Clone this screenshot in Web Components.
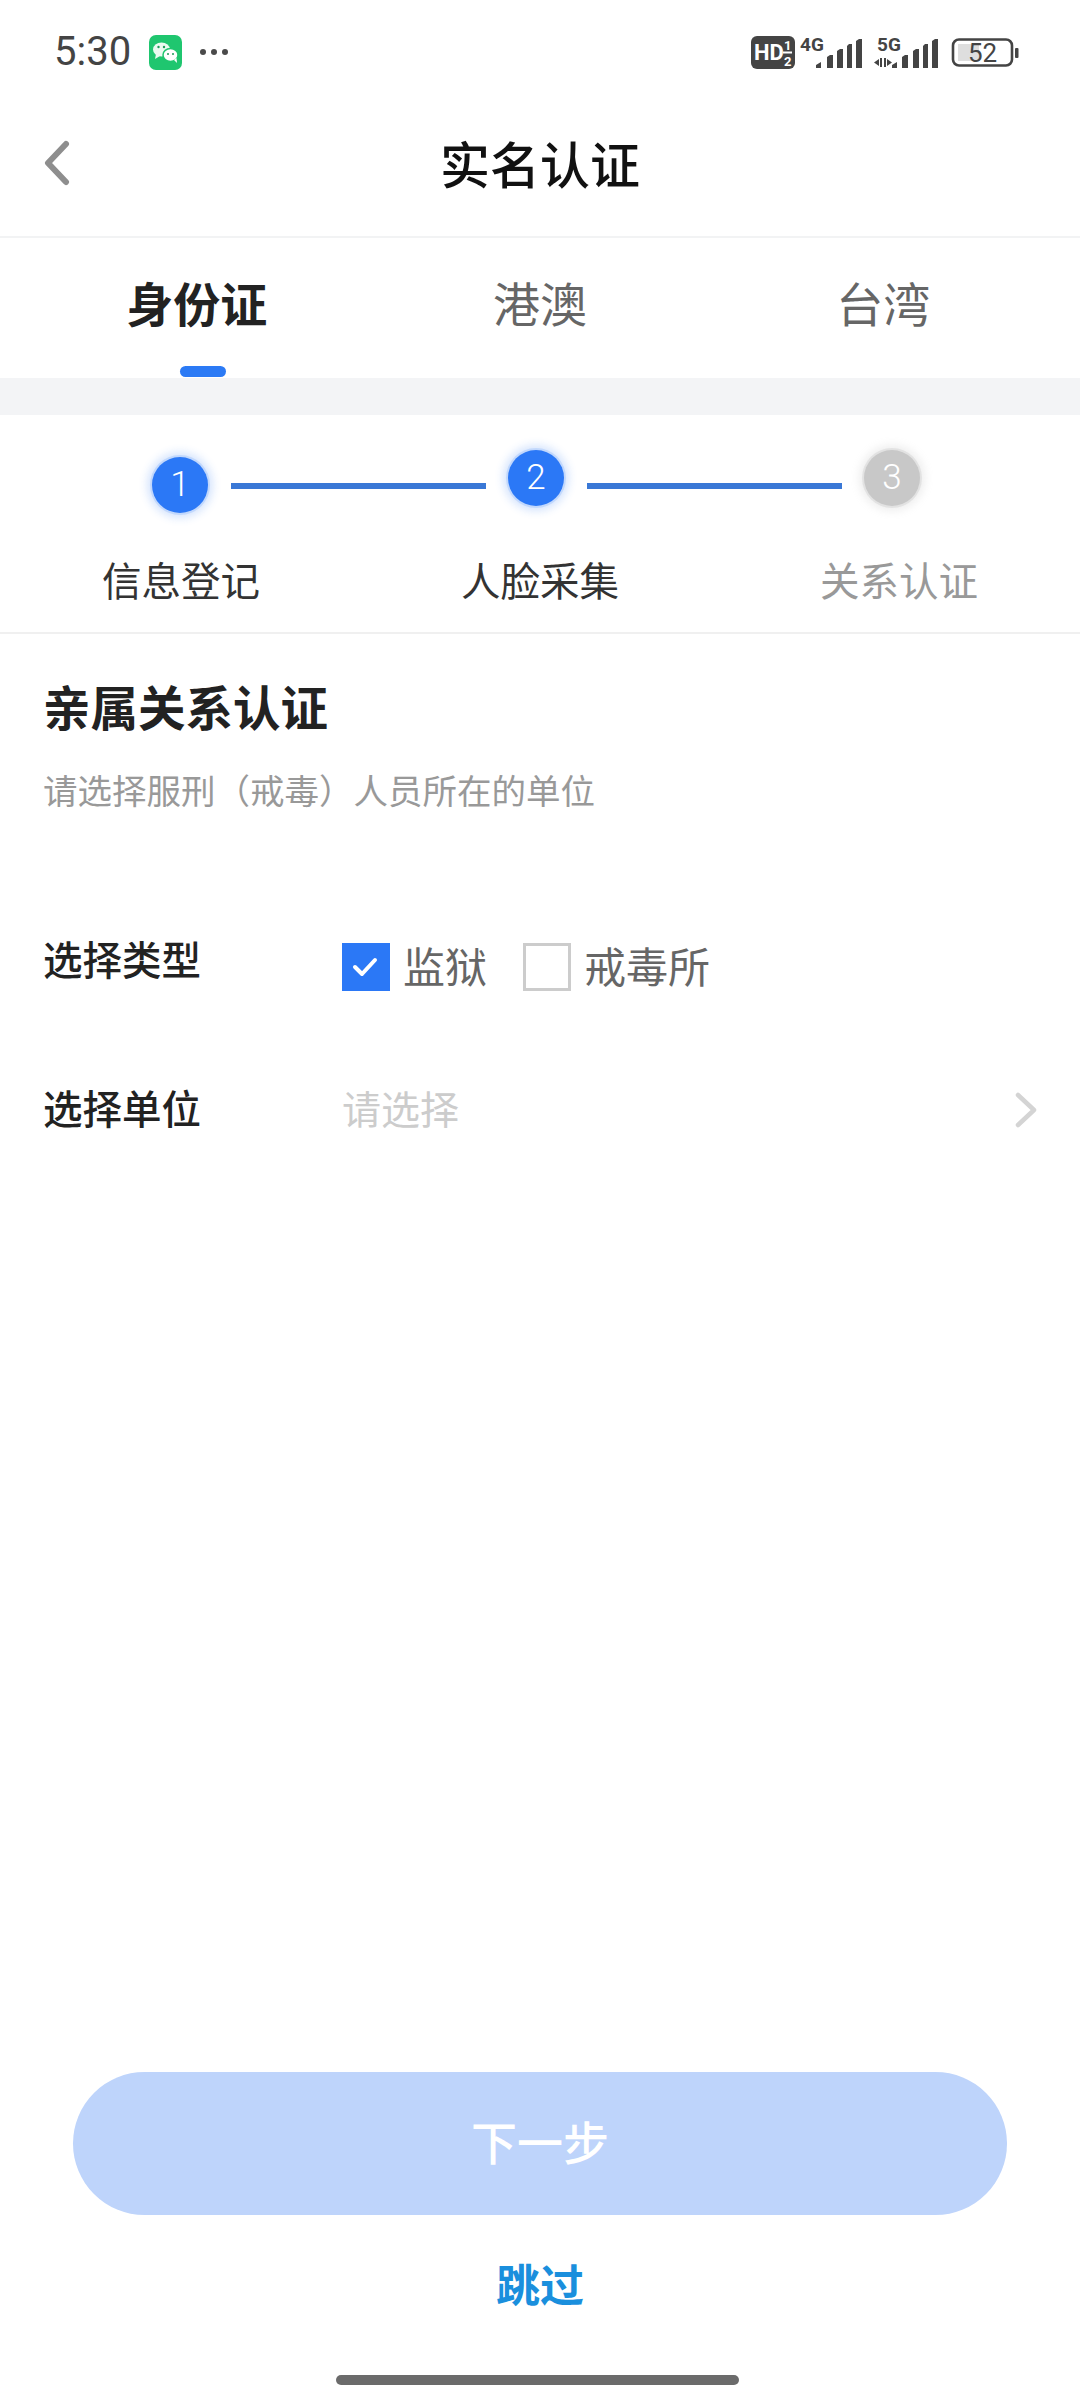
<!DOCTYPE html>
<html lang="zh-CN">
<head>
<meta charset="utf-8">
<title>实名认证</title>
<style>
  html, body { margin: 0; padding: 0; background: #fff; }
  body { font-family: "Noto Sans CJK SC", "Noto Sans", sans-serif; }
</style>
</head>
<body>
<app-page>
  <status-bar></status-bar>
  <nav-bar>实名认证</nav-bar>
  <id-tabs></id-tabs>
  <step-bar></step-bar>
  <relation-form></relation-form>
  <footer-actions slot="footer"></footer-actions>
</app-page>

<script>
const CJK = '"Noto Sans CJK SC", "Noto Sans", sans-serif';

class AppPage extends HTMLElement {
  constructor() {
    super();
    this.attachShadow({ mode: 'open' });
    this.shadowRoot.innerHTML = `
      <style>
        :host { display: flex; flex-direction: column; width: 1080px; height: 2401px; background: #fff; overflow: hidden; }
        .grow { flex: 1; }
      </style>
      <slot></slot>
      <div class="grow"></div>
      <slot name="footer"></slot>
    `;
  }
}

class StatusBar extends HTMLElement {
  constructor() {
    super();
    this.attachShadow({ mode: 'open' });
    this.shadowRoot.innerHTML = `
      <style>
        :host { display: flex; align-items: center; justify-content: space-between; box-sizing: border-box; height: 90px; padding: 14px 61px 0 54px; }
        .left { display: flex; align-items: center; }
        .time { font: 400 40px/44px Roboto, sans-serif; color: #444; width: 95px; }
        svg { display: block; }
        .dots { margin-left: 17px; }
      </style>
      <div class="left">
        <span class="time">5:30</span>
        <svg width="33" height="35" viewBox="0 0 33 35">
          <rect width="33" height="35" rx="7" fill="#1fc66f"/>
          <ellipse cx="12.5" cy="14.5" rx="8.5" ry="7" fill="#eafaf0"/>
          <path d="M7 19l-1 5 5-3z" fill="#eafaf0"/>
          <ellipse cx="21.5" cy="20" rx="7.5" ry="6.5" fill="#fff" stroke="#1fc66f" stroke-width="1.5"/>
          <path d="M25 25l3 3-.5-5z" fill="#fff"/>
          <circle cx="9.5" cy="12" r="1.2" fill="#1c9a58"/><circle cx="15" cy="12" r="1.2" fill="#1c9a58"/>
          <circle cx="19" cy="19" r="1" fill="#1c9a58"/><circle cx="24" cy="19" r="1" fill="#1c9a58"/>
        </svg>
        <svg class="dots" width="30" height="8" viewBox="0 0 30 8" fill="#4a4a4a">
          <circle cx="4" cy="4" r="3"/><circle cx="15" cy="4" r="3"/><circle cx="26" cy="4" r="3"/>
        </svg>
      </div>
      <svg width="268" height="44" viewBox="751 30 268 44" font-family="Roboto, sans-serif" fill="#444">
        <rect x="751" y="36" width="44" height="33" rx="6" fill="#444"/>
        <text x="754" y="60" font-size="22" font-weight="700" fill="#fff">HD</text>
        <text x="784" y="50" font-size="13" font-weight="700" fill="#fff">1</text>
        <rect x="783" y="51.5" width="9" height="2" fill="#fff"/>
        <text x="784" y="66" font-size="13" font-weight="700" fill="#fff">2</text>

        <text x="800" y="51" font-size="19" font-weight="700">4G</text>
        <path d="M816 68v-3l5-3v6zM827 68v-11l3-2h3v13zM837 68V51l3-2h3v19zM847 68V46l2-2h3v24zM856 68V41l3-2h3v29z"/>

        <text x="877" y="51" font-size="19" font-weight="700">5G</text>
        <path d="M879 59v7l-5-3.500zM880 58h2v9h-2zM884 58h2v9h-2zM887 59v7l5-3.500z"/>
        <path d="M892 68v-3l5-3v6zM902 68v-11l3-2h3v13zM913 68V51l3-2h3v19zM923 68V46l2-2h3v24zM932 68V41l3-2h3v29z"/>

        <rect x="953" y="39.5" width="59" height="26" rx="6" fill="none" stroke="#444" stroke-width="2.6"/>
        <rect x="958" y="44" width="21" height="17" fill="#dedede"/>
        <text x="968" y="62" font-size="26" fill="#444">52</text>
        <rect x="1015" y="48" width="3.5" height="10" rx="1"/>
      </svg>
    `;
  }
}

class NavBar extends HTMLElement {
  constructor() {
    super();
    this.attachShadow({ mode: 'open' });
    this.shadowRoot.innerHTML = `
      <style>
        :host { display: flex; align-items: center; justify-content: center; box-sizing: border-box; height: 148px; padding-bottom: 2px; border-bottom: 2px solid #f2f3f4; font: 500 50px/60px ${CJK}; color: #111; }
        .back { position: absolute; left: 42px; top: 140px; display: block; }
      </style>
      <svg class="back" width="30" height="46" viewBox="0 0 30 46" fill="none" stroke="#8e8e8e" stroke-width="6" stroke-linecap="round" stroke-linejoin="round">
        <path d="M24 4L6 23l18 19"/>
      </svg>
      <slot></slot>
    `;
  }
}

class IdTabs extends HTMLElement {
  constructor() {
    super();
    this.attachShadow({ mode: 'open' });
    this.shadowRoot.innerHTML = `
      <style>
        :host { display: flex; box-sizing: border-box; height: 140px; padding: 0 25px; }
        .tab { flex: 1; display: flex; flex-direction: column; align-items: center; padding-top: 34px; font: 400 47px/60px ${CJK}; color: #666; }
        .tab.on { font-weight: 700; color: #222; }
        .bar { width: 46px; height: 11px; border-radius: 6px; background: #2b7af5; margin: 34px 0 0 12px; }
      </style>
      <div class="tab on">身份证<div class="bar"></div></div>
      <div class="tab">港澳</div>
      <div class="tab">台湾</div>
    `;
  }
}

class StepDot extends HTMLElement {
  constructor() {
    super();
    this.attachShadow({ mode: 'open' });
    this.shadowRoot.innerHTML = `
      <style>
        :host { display: flex; align-items: center; justify-content: center; flex: none; width: 56px; height: 56px; border-radius: 50%; background: #2b78f6; box-shadow: 0 0 0 2px rgba(43,120,246,.15), 0 0 9px 5px rgba(43,120,246,.2); font: 300 35px/56px Roboto, sans-serif; color: #fff; }
        :host([idle]) { background: #c8c8c8; box-shadow: 0 0 0 2px rgba(170,170,170,.2), 0 0 8px 5px rgba(170,170,170,.2); }
      </style>
      <slot></slot>
    `;
  }
}

class StepBar extends HTMLElement {
  constructor() {
    super();
    this.attachShadow({ mode: 'open' });
    this.shadowRoot.innerHTML = `
      <style>
        :host { display: block; box-sizing: border-box; height: 220px; margin-top: 36px; border-top: 1px solid #f3f4f6; border-bottom: 2px solid #f0f0f0; box-shadow: 0 -36px 0 0 #f3f4f6; padding-top: 35px; }
        .track { display: flex; align-items: flex-start; padding-left: 152px; height: 64px; }
        .first { margin-top: 7px; }
        .line { flex: none; width: 255px; height: 6px; margin: 33px 22px 0 23px; background: #3a78d6; }
        .labels { display: flex; justify-content: space-between; padding: 40px 102px 0; font: 400 39.5px/50px ${CJK}; color: #333; }
        .off { color: #999; }
      </style>
      <div class="track">
        <step-dot class="first">1</step-dot>
        <div class="line"></div>
        <step-dot>2</step-dot>
        <div class="line"></div>
        <step-dot idle>3</step-dot>
      </div>
      <div class="labels">
        <span>信息登记</span>
        <span>人脸采集</span>
        <span class="off">关系认证</span>
      </div>
    `;
  }
}

class CheckOption extends HTMLElement {
  constructor() {
    super();
    this.attachShadow({ mode: 'open' });
    this.shadowRoot.innerHTML = `
      <style>
        :host { display: inline-flex; align-items: center; gap: 13px; font: 400 42px/48px ${CJK}; color: #666; }
        .box { box-sizing: border-box; width: 48px; height: 48px; border: 3px solid #ccc; background: #fff; display: block; }
        :host([checked]) .box { border-color: #2b78f6; background: #2b78f6; }
        svg { display: none; }
        :host([checked]) svg { display: block; margin: 9px 0 0 7px; }
        span { margin-bottom: 4px; }
      </style>
      <div class="box">
        <svg width="28" height="24" viewBox="0 0 28 24" fill="none" stroke="#fff" stroke-width="4" stroke-linecap="round" stroke-linejoin="round"><path d="M3 12l7 7L23 5"/></svg>
      </div>
      <span><slot></slot></span>
    `;
  }
}

class FormRow extends HTMLElement {
  constructor() {
    super();
    this.attachShadow({ mode: 'open' });
    this.shadowRoot.innerHTML = `
      <style>
        :host { display: flex; align-items: center; height: 72px; }
        .label { flex: none; width: 299px; margin-bottom: 6px; font: 500 39.5px/50px ${CJK}; color: #222; }
        :host([raised]) .label { margin-bottom: 19px; }
        .value { flex: 1; display: flex; align-items: center; }
      </style>
      <div class="label"><slot name="label"></slot></div>
      <div class="value"><slot></slot></div>
    `;
  }
}

class RelationForm extends HTMLElement {
  constructor() {
    super();
    this.attachShadow({ mode: 'open' });
    this.shadowRoot.innerHTML = `
      <style>
        :host { display: block; padding: 42px 42px 0 43px; }
        h2 { margin: 0; font: 700 47.5px/60px ${CJK}; color: #222; }
        p { margin: 31px 0 120px; font: 400 34.5px/44px ${CJK}; color: #999; }
        .rows { display: flex; flex-direction: column; gap: 71px; }
        .opts { display: flex; gap: 36px; }
        .pick { flex: 1; display: flex; align-items: center; justify-content: space-between; font: 400 39px/50px ${CJK}; color: #ccc; }
        .pick span { margin-bottom: 6px; }
        svg { display: block; }
      </style>
      <h2>亲属关系认证</h2>
      <p>请选择服刑（戒毒）人员所在的单位</p>
      <div class="rows">
        <form-row raised>
          <span slot="label">选择类型</span>
          <div class="opts">
            <check-option checked>监狱</check-option>
            <check-option>戒毒所</check-option>
          </div>
        </form-row>
        <form-row>
          <span slot="label">选择单位</span>
          <div class="pick">
            <span>请选择</span>
            <svg width="24" height="36" viewBox="0 0 24 36" fill="none" stroke="#d4d4d4" stroke-width="4.5" stroke-linecap="round" stroke-linejoin="round"><path d="M4 3l16 15L4 33"/></svg>
          </div>
        </form-row>
      </div>
    `;
  }
}

class FooterActions extends HTMLElement {
  constructor() {
    super();
    this.attachShadow({ mode: 'open' });
    this.shadowRoot.innerHTML = `
      <style>
        :host { display: flex; flex-direction: column; align-items: center; padding-bottom: 16px; }
        .next { box-sizing: border-box; width: 934px; height: 143px; padding-bottom: 8px; border-radius: 72px; background: #bed4fb; color: #fff; display: flex; align-items: center; justify-content: center; font: 500 46px/60px ${CJK}; }
        .skip { margin-top: 38px; font: 700 44px/60px ${CJK}; color: #1a8fdd; }
        .home { width: 403px; height: 10px; margin: 62px 6px 0 0; border-radius: 5px; background: #6b6b6b; }
      </style>
      <div class="next">下一步</div>
      <div class="skip">跳过</div>
      <div class="home"></div>
    `;
  }
}

customElements.define('app-page', AppPage);
customElements.define('status-bar', StatusBar);
customElements.define('nav-bar', NavBar);
customElements.define('id-tabs', IdTabs);
customElements.define('step-dot', StepDot);
customElements.define('step-bar', StepBar);
customElements.define('check-option', CheckOption);
customElements.define('form-row', FormRow);
customElements.define('relation-form', RelationForm);
customElements.define('footer-actions', FooterActions);
</script>
</body>
</html>
